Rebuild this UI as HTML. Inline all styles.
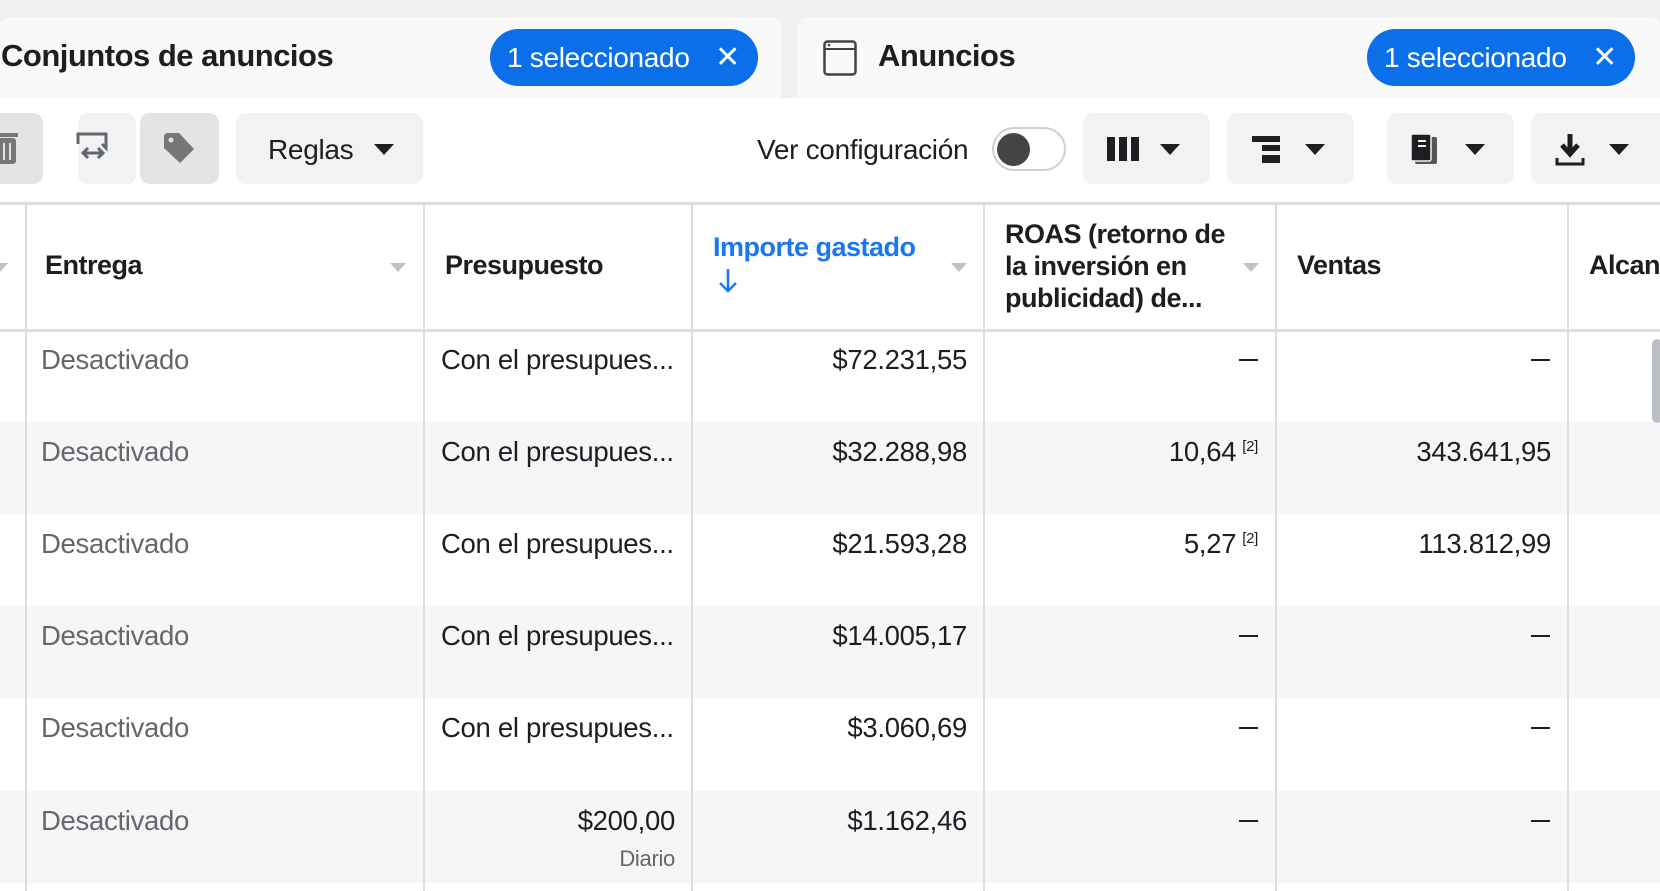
<!DOCTYPE html>
<html><head><meta charset="utf-8"><style>
*{margin:0;padding:0;box-sizing:border-box}
body{width:1660px;height:891px;overflow:hidden;background:#fff;font-family:"Liberation Sans",sans-serif;color:#1c1e21;position:relative}
.abs{position:absolute}
.topbg{left:0;top:0;width:1660px;height:98px;background:#f0f0f0}
.card{top:17px;height:81px;background:#f9f9f9;border-radius:10px 10px 0 0}
.title{font-weight:bold;font-size:31px;letter-spacing:-0.5px;top:38px}
.pill{top:29px;height:57px;background:#0a6fe8;border-radius:29px;color:#fff;font-size:28px;letter-spacing:-0.3px;line-height:57px;padding-left:17px}
.pill span{position:absolute;right:18px;top:0;font-size:30px}
.btn{top:113px;height:71px;background:#f2f2f2;border-radius:10px}
.tri{width:0;height:0;border-left:10px solid transparent;border-right:10px solid transparent;border-top:11px solid #1c1e21;position:absolute}
.hl{top:202px;left:0;width:1660px;height:3px;background:#dadde1}
.vl{top:202px;width:2px;height:689px;background:#dadde1}
.row{left:0;width:1660px;height:92px;position:absolute}
.g{background:#f5f6f7}
.h{font-weight:bold;font-size:27px;letter-spacing:-0.5px;position:absolute}
.c{position:absolute;font-size:27.5px;letter-spacing:-0.3px;white-space:nowrap}
.gray{color:#65676b}
.r{text-align:right}
.ht{width:0;height:0;border-left:8px solid transparent;border-right:8px solid transparent;border-top:9px solid #bec3c9;position:absolute}
sup{font-size:15px;vertical-align:10px;margin-left:6px}
.d{position:absolute;width:19px;height:2px;background:#1c1e21}
</style></head><body>
<div class="abs topbg"></div>
<div class="abs card" style="left:0;width:781px"></div>
<div class="abs card" style="left:798px;width:862px"></div>
<div class="abs title" style="left:1px">Conjuntos de anuncios</div>
<div class="abs pill" style="left:490px;width:268px">1 seleccionado<span>✕</span></div>
<svg class="abs" style="left:823px;top:40px" width="34" height="36" viewBox="0 0 34 36"><rect x="1.5" y="1.5" width="31" height="33" rx="3" fill="none" stroke="#444" stroke-width="2.5"/><line x1="2" y1="9" x2="32" y2="9" stroke="#444" stroke-width="2"/><circle cx="6" cy="5" r="1.3" fill="#444"/></svg>
<div class="abs title" style="left:878px">Anuncios</div>
<div class="abs pill" style="left:1367px;width:268px">1 seleccionado<span>✕</span></div>
<div class="abs" style="left:0;top:98px;width:1660px;height:104px;background:#fff"></div>
<div class="abs btn" style="left:0;width:43px;background:#e4e4e4;border-radius:0 10px 10px 0"></div>
<svg class="abs" style="left:0;top:132px" width="20" height="34"><rect x="-6" y="6" width="22" height="26" rx="3" fill="#777"/><rect x="-6" y="1" width="24" height="4" fill="#777"/><line x1="4" y1="11" x2="4" y2="28" stroke="#e4e4e4" stroke-width="2"/><line x1="10" y1="11" x2="10" y2="28" stroke="#e4e4e4" stroke-width="2"/></svg>
<div class="abs btn" style="left:78px;width:58px"></div>
<svg class="abs" style="left:74px;top:130px" width="40" height="36" viewBox="0 0 40 36"><path d="M4 14V4h28v14l-4 -4" fill="none" stroke="#606770" stroke-width="3"/><path d="M14 18l-5 5 5 5M24 18l5 5-5 5M9 23h20" fill="none" stroke="#606770" stroke-width="3"/></svg>
<div class="abs btn" style="left:140px;width:79px;background:#e4e4e4"></div>
<svg class="abs" style="left:161px;top:131px" width="36" height="36" viewBox="0 0 36 36"><path d="M3 6q0-4 4-4h11l15 16-14 14L3 17z" fill="#777"/><circle cx="10" cy="9" r="2.5" fill="#e4e4e4"/></svg>
<div class="abs btn" style="left:236px;width:187px"></div>
<div class="abs" style="left:268px;top:134px;font-size:28px;letter-spacing:-0.3px">Reglas</div>
<div class="tri" style="left:374px;top:144px"></div>
<div class="abs" style="left:757px;top:134px;font-size:28px;letter-spacing:-0.3px">Ver configuración</div>
<div class="abs" style="left:992px;top:127px;width:74px;height:44px;border:2px solid #ccd0d5;border-radius:22px;background:#fff"></div>
<div class="abs" style="left:997px;top:133px;width:33px;height:33px;border-radius:50%;background:#444"></div>
<div class="abs btn" style="left:1083px;width:127px"></div>
<div class="abs" style="left:1107px;top:137px;width:8px;height:24px;background:#1c1e21"></div>
<div class="abs" style="left:1119px;top:137px;width:8px;height:24px;background:#1c1e21"></div>
<div class="abs" style="left:1131px;top:137px;width:8px;height:24px;background:#1c1e21"></div>
<div class="tri" style="left:1160px;top:144px"></div>
<div class="abs btn" style="left:1227px;width:127px"></div>
<div class="abs" style="left:1252px;top:136px;width:28px;height:6px;background:#1c1e21"></div>
<div class="abs" style="left:1262px;top:145px;width:18px;height:6px;background:#1c1e21"></div>
<div class="abs" style="left:1262px;top:155px;width:18px;height:8px;background:#1c1e21"></div>
<div class="tri" style="left:1305px;top:144px"></div>
<div class="abs btn" style="left:1387px;width:127px"></div>
<svg class="abs" style="left:1410px;top:133px" width="30" height="32"><rect x="5" y="4" width="22" height="27" rx="2" fill="#555"/><rect x="1" y="1" width="20" height="27" rx="2" fill="#1c1e21" stroke="#f2f2f2" stroke-width="1.5"/><line x1="8" y1="8" x2="16" y2="8" stroke="#f2f2f2" stroke-width="2"/><line x1="8" y1="13" x2="16" y2="13" stroke="#f2f2f2" stroke-width="2"/></svg>
<div class="tri" style="left:1465px;top:144px"></div>
<div class="abs btn" style="left:1531px;width:140px"></div>
<svg class="abs" style="left:1555px;top:133px" width="30" height="34"><path d="M15 1v18M7 12l8 9 8-9" fill="none" stroke="#1c1e21" stroke-width="5"/><path d="M2 25v6h26v-6" fill="none" stroke="#1c1e21" stroke-width="3"/></svg>
<div class="tri" style="left:1609px;top:144px"></div>

<div class="row g" style="top:422px"></div>
<div class="row g" style="top:606px"></div>
<div class="row g" style="top:791px"></div>
<div class="abs hl"></div>
<div class="abs hl" style="top:329px"></div>
<div class="abs vl" style="left:25px"></div>
<div class="abs vl" style="left:423px"></div>
<div class="abs vl" style="left:691px"></div>
<div class="abs vl" style="left:983px"></div>
<div class="abs vl" style="left:1275px"></div>
<div class="abs vl" style="left:1567px"></div>
<div class="abs" style="left:1652px;top:339px;width:10px;height:84px;background:#bcc0c4;border-radius:5px"></div>

<div class="ht" style="left:-8px;top:263px"></div>
<div class="h" style="left:45px;top:250px">Entrega</div><div class="ht" style="left:390px;top:263px"></div>
<div class="h" style="left:445px;top:250px">Presupuesto</div>
<div class="h" style="left:713px;top:232px;color:#1877f2">Importe gastado</div>
<svg class="abs" style="left:717px;top:268px" width="22" height="26"><path d="M11 1v22M3 15l8 8 8-8" fill="none" stroke="#1877f2" stroke-width="2.5"/></svg>
<div class="ht" style="left:951px;top:263px"></div>
<div class="h" style="left:1005px;top:218px;line-height:32px">ROAS (retorno de<br>la inversión en<br>publicidad) de...</div>
<div class="ht" style="left:1243px;top:263px"></div>
<div class="h" style="left:1297px;top:250px">Ventas</div>
<div class="h" style="left:1589px;top:250px">Alcan</div>

<div class="c gray" style="left:41px;top:344px">Desactivado</div><div class="c" style="left:441px;top:344px">Con el presupues...</div><div class="c r" style="right:693px;top:344px">$72.231,55</div><div class="d" style="left:1239px;top:359px"></div><div class="d" style="left:1531px;top:359px"></div>
<div class="c gray" style="left:41px;top:436px">Desactivado</div><div class="c" style="left:441px;top:436px">Con el presupues...</div><div class="c r" style="right:402px;top:436px">10,64<sup>[2]</sup></div><div class="c r" style="right:693px;top:436px">$32.288,98</div><div class="c r" style="right:109px;top:436px">343.641,95</div>
<div class="c gray" style="left:41px;top:528px">Desactivado</div><div class="c" style="left:441px;top:528px">Con el presupues...</div><div class="c r" style="right:693px;top:528px">$21.593,28</div><div class="c r" style="right:402px;top:528px">5,27<sup>[2]</sup></div><div class="c r" style="right:109px;top:528px">113.812,99</div>
<div class="c gray" style="left:41px;top:620px">Desactivado</div><div class="c" style="left:441px;top:620px">Con el presupues...</div><div class="c r" style="right:693px;top:620px">$14.005,17</div><div class="d" style="left:1239px;top:635px"></div><div class="d" style="left:1531px;top:635px"></div>
<div class="c gray" style="left:41px;top:712px">Desactivado</div><div class="c" style="left:441px;top:712px">Con el presupues...</div><div class="c r" style="right:693px;top:712px">$3.060,69</div><div class="d" style="left:1239px;top:727px"></div><div class="d" style="left:1531px;top:727px"></div>
<div class="c gray" style="left:41px;top:805px">Desactivado</div><div class="c r" style="right:985px;top:805px">$200,00</div><div class="c r gray" style="right:985px;top:846px;font-size:22px">Diario</div><div class="c r" style="right:693px;top:805px">$1.162,46</div><div class="d" style="left:1239px;top:820px"></div><div class="d" style="left:1531px;top:820px"></div>
</body></html>
